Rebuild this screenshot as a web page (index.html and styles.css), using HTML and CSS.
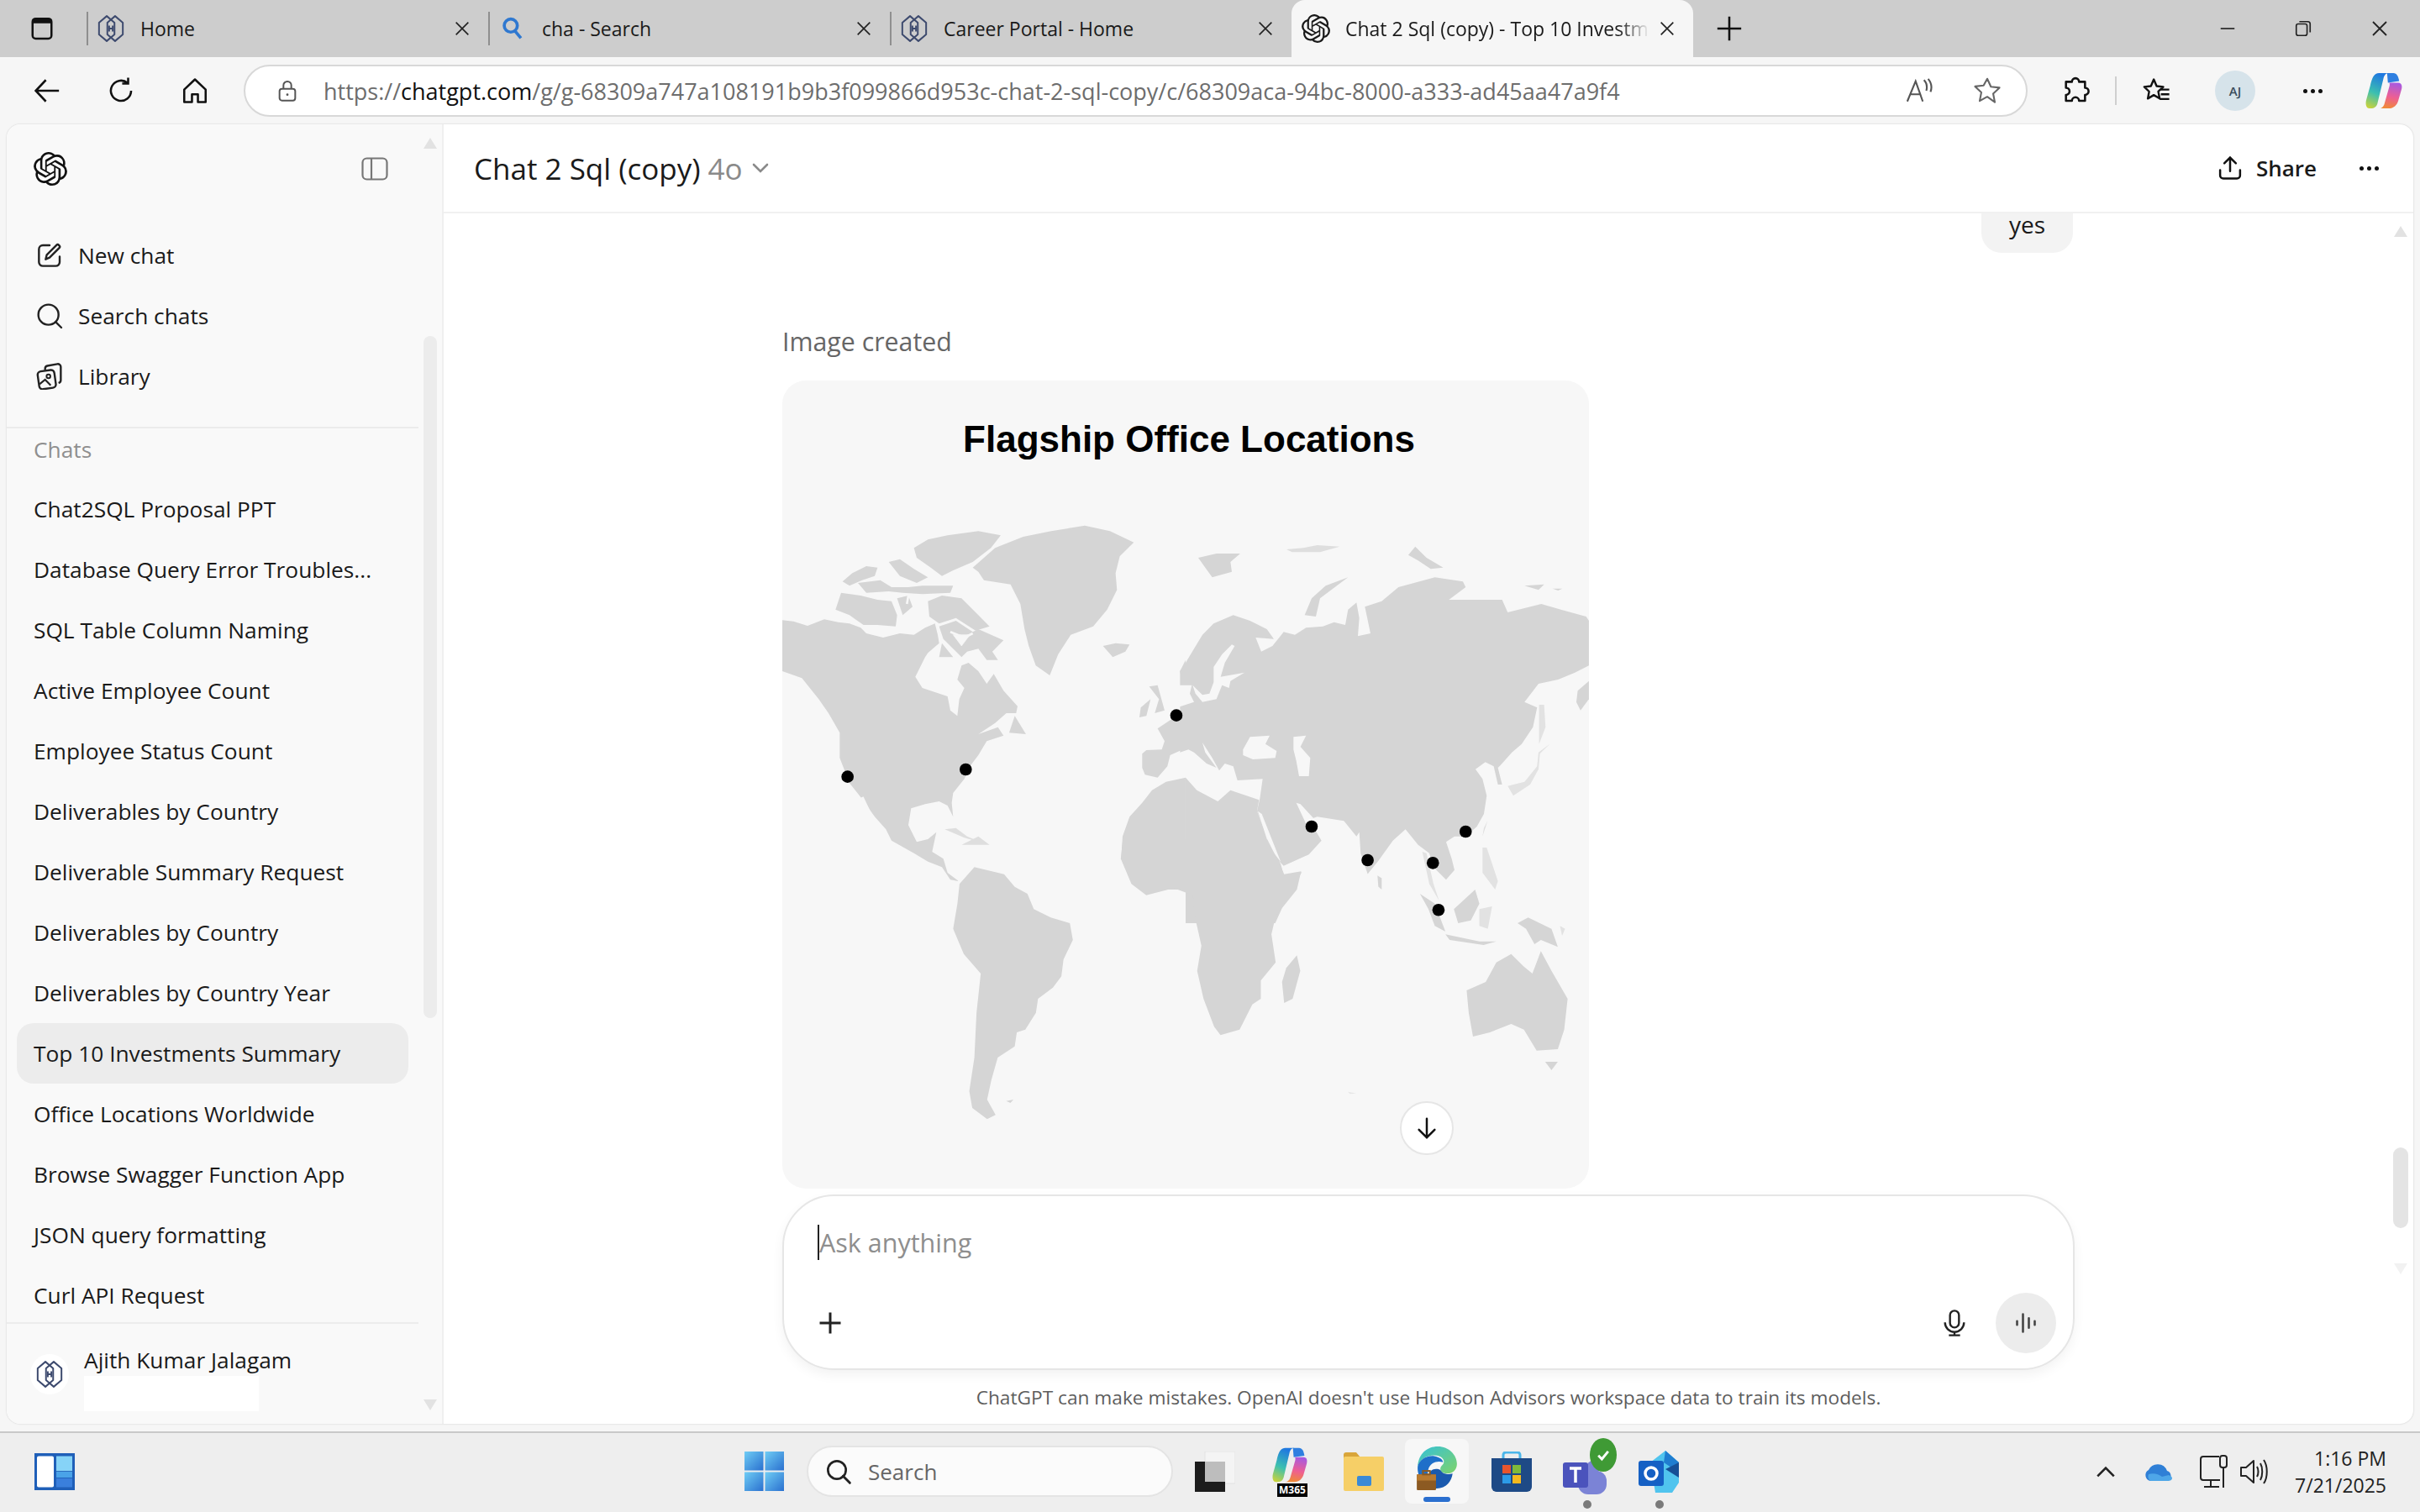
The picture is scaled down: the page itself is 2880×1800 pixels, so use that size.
FILE: index.html
```html
<!DOCTYPE html>
<html lang="en">
<head>
    <meta charset="UTF-8">
    <title>Chat 2 Sql (copy) - Top 10 Investments Summary</title>
    <link rel="stylesheet" href="styles.css">
</head>
<body>
    <svg class="defs" width="0" height="0">
        <symbol id="hex" viewBox="0 0 24 24">
            <g fill="none" stroke="currentColor" stroke-width="1.4" stroke-linejoin="round">
                <path d="M8.5 1.5 15 7v10l-6.5 5.500L2 17V7z"/>
                <path d="M15.5 1.5 22 7v10l-6.5 5.500L9 17V7z"/>
                <path d="M10.5 9.500v5M13.500 9.500v5M10.500 12h3"/>
            </g>
        </symbol>
        <symbol id="openai" viewBox="0 0 24 24">
            <path fill="currentColor" d="M22.2819 9.8211a5.9847 5.9847 0 0 0-.5157-4.9108 6.0462 6.0462 0 0 0-6.5098-2.9A6.0651 6.0651 0 0 0 4.9807 4.1818a5.9847 5.9847 0 0 0-3.9977 2.9 6.0462 6.0462 0 0 0 .7427 7.0966 5.98 5.98 0 0 0 .511 4.9107 6.051 6.051 0 0 0 6.5146 2.9001A5.9847 5.9847 0 0 0 13.2599 24a6.0557 6.0557 0 0 0 5.7718-4.2058 5.9894 5.9894 0 0 0 3.9977-2.9001 6.0557 6.0557 0 0 0-.7475-7.0729zm-9.022 12.6081a4.4755 4.4755 0 0 1-2.8764-1.0408l.1419-.0804 4.7783-2.7582a.7948.7948 0 0 0 .3927-.6813v-6.7369l2.02 1.1686a.071.071 0 0 1 .038.052v5.5826a4.504 4.504 0 0 1-4.4945 4.4944zm-9.6607-4.1254a4.4708 4.4708 0 0 1-.5346-3.0137l.142.0852 4.783 2.7582a.7712.7712 0 0 0 .7806 0l5.8428-3.3685v2.3324a.0804.0804 0 0 1-.0332.0615L9.74 19.9502a4.4992 4.4992 0 0 1-6.1408-1.6464zM2.3408 7.8956a4.485 4.485 0 0 1 2.3655-1.9728V11.6a.7664.7664 0 0 0 .3879.6765l5.8144 3.3543-2.0201 1.1685a.0757.0757 0 0 1-.071 0l-4.8303-2.7865A4.504 4.504 0 0 1 2.3408 7.872zm16.5963 3.8558L13.1038 8.364 15.1192 7.2a.0757.0757 0 0 1 .071 0l4.8303 2.7913a4.4944 4.4944 0 0 1-.6765 8.1042v-5.6772a.79.79 0 0 0-.407-.667zm2.0107-3.0231l-.142-.0852-4.7735-2.7818a.7759.7759 0 0 0-.7854 0L9.409 9.2297V6.8974a.0662.0662 0 0 1 .0284-.0615l4.8303-2.7866a4.4992 4.4992 0 0 1 6.6802 4.66zM8.3065 12.863l-2.02-1.1638a.0804.0804 0 0 1-.038-.0567V6.0742a4.4992 4.4992 0 0 1 7.3757-3.4537l-.142.0805L8.704 5.459a.7948.7948 0 0 0-.3927.6813zm1.0976-2.3654l2.602-1.4998 2.6069 1.4998v2.9994l-2.5974 1.4997-2.6067-1.4997Z"/>
        </symbol>
        <symbol id="close" viewBox="0 0 24 24">
            <path d="M4 4l16 16M20 4 4 20" fill="none" stroke="currentColor" stroke-width="1.8"/>
        </symbol>
        <symbol id="copilot" viewBox="0 0 24 24">
            <path d="M14 1h4c2 0 3 2 3.500 5l-7 1z" fill="#2f7fe0"/>
            <path d="M9 1h6c-2 0-2.800 1.500-3.300 3.500L8 20c-.5 2-2 3-4 3H3c-2 0-2.500-2.500-2-5l2.500-9C4.500 4 6 1 9 1z" fill="url(#copilot-a)"/>
            <path d="M15 7h6c2 0 2.500 2 2 4l-2 7c-.8 3-3 5-6 5H9c2 0 3-1.500 3.500-3.500L15.500 9c.2-1 .2-2-.5-2z" fill="url(#copilot-b)"/>
        </symbol>
        <linearGradient id="copilot-a" x1="0.5" y1="0" x2="0.2" y2="1">
            <stop offset="0" stop-color="#1f78e0"/>
            <stop offset="0.55" stop-color="#3cc0b0"/>
            <stop offset="1" stop-color="#c8d23c"/>
        </linearGradient>
        <linearGradient id="copilot-b" x1="0.6" y1="0" x2="0.4" y2="1">
            <stop offset="0" stop-color="#a85ae0"/>
            <stop offset="0.55" stop-color="#ee5f92"/>
            <stop offset="1" stop-color="#f08a36"/>
        </linearGradient>
        <linearGradient id="edge-a" x1="0" y1="0" x2="1" y2="1">
            <stop offset="0" stop-color="#35c1d8"/>
            <stop offset="1" stop-color="#7ed36a"/>
        </linearGradient>
        <linearGradient id="win-a" x1="0" y1="0" x2="1" y2="1">
            <stop offset="0" stop-color="#6fcdf5"/>
            <stop offset="1" stop-color="#2a70cf"/>
        </linearGradient>
    </svg>

    <div class="tabbar">
        <svg class="tab-panel" viewBox="0 0 24 24" width="30" height="30"><rect x="3" y="2.500" width="18" height="19" rx="3" fill="none" stroke="#111" stroke-width="2"/><path d="M3 3h18v4H3z" fill="#111"/></svg>
        <div class="tab">
            <svg class="tab-icon icon-hex"><use href="#hex"/></svg>
            <span class="tab-title">Home</span>
            <svg class="tab-close"><use href="#close"/></svg>
        </div>
        <div class="tab">
            <svg class="tab-icon" viewBox="0 0 24 24"><circle cx="10.500" cy="9.500" r="5.500" fill="none" stroke="#2f78d0" stroke-width="2.600"/><path d="M14 14l5 6" stroke="#2f78d0" stroke-width="2.600"/></svg>
            <span class="tab-title">cha - Search</span>
            <svg class="tab-close"><use href="#close"/></svg>
        </div>
        <div class="tab">
            <svg class="tab-icon icon-hex"><use href="#hex"/></svg>
            <span class="tab-title">Career Portal - Home</span>
            <svg class="tab-close"><use href="#close"/></svg>
        </div>
        <div class="tab tab-active">
            <svg class="tab-icon"><use href="#openai"/></svg>
            <span class="tab-title">Chat 2 Sql (copy) - Top 10 Investm</span>
            <svg class="tab-close"><use href="#close"/></svg>
        </div>
        <svg class="tab-new" viewBox="0 0 24 24" width="34" height="34"><path d="M12 2v20M2 12h20" stroke="#111" stroke-width="1.800"/></svg>
        <div class="window-controls">
            <svg viewBox="0 0 24 24" width="22" height="22"><path d="M3 12h18" stroke="#222" stroke-width="1.800"/></svg>
            <svg viewBox="0 0 24 24" width="22" height="22"><rect x="3" y="6" width="14" height="15" rx="2.500" fill="none" stroke="#222" stroke-width="1.800"/><path d="M7 3h11a3 3 0 0 1 3 3v11" fill="none" stroke="#222" stroke-width="1.800"/></svg>
            <svg width="24" height="24" class="win-close"><use href="#close"/></svg>
        </div>
    </div>

    <div class="toolbar">
        <svg class="tool tool-back" viewBox="0 0 24 24"><path d="M22 12H3M11 3l-8.500 9 8.500 9" fill="none" stroke="#111" stroke-width="1.800"/></svg>
        <svg class="tool tool-reload" viewBox="0 0 24 24"><path d="M20.500 12a8.500 8.500 0 1 1-3-6.500M18 1v5h-5" fill="none" stroke="#111" stroke-width="1.800"/></svg>
        <svg class="tool tool-home" viewBox="0 0 24 24"><path d="M3 11 12 2.500 21 11v10.500h-6.500V15h-5v6.500H3z" fill="none" stroke="#111" stroke-width="1.800" stroke-linejoin="round"/></svg>
        <div class="address">
            <svg class="lock" viewBox="0 0 24 24"><rect x="4" y="10" width="16" height="12" rx="2.500" fill="none" stroke="#555" stroke-width="1.700"/><path d="M8 10V6.500a4 4 0 0 1 8 0V10" fill="none" stroke="#555" stroke-width="1.700"/><circle cx="12" cy="16" r="1.200" fill="#555"/></svg>
            <span class="url"><span class="url-dim">https://</span>chatgpt.com<span class="url-dim">/g/g-68309a747a108191b9b3f099866d953c-chat-2-sql-copy/c/68309aca-94bc-8000-a333-ad45aa47a9f4</span></span>
            <svg class="addr-read" viewBox="0 0 24 24"><path d="M2 21 9 4l6 17M4.500 15h9M16 3c2 2 3 5 2 9M19.500 2c2.500 3 3.500 7 2 11" fill="none" stroke="#555" stroke-width="1.500"/></svg>
            <svg class="addr-star" viewBox="0 0 24 24"><path d="M12 2.500l2.900 6.300 6.800.8-5 4.700 1.300 6.800L12 16.800l-6 3.300 1.300-6.800-5-4.700 6.800-.8z" fill="none" stroke="#666" stroke-width="1.400" stroke-linejoin="round"/></svg>
        </div>
        <svg class="tool tool-ext" viewBox="0 0 24 24"><path d="M9 4.500a3 3 0 0 1 6 0h5v5a3 3 0 0 1 0 6v5h-5a3 3 0 0 0-6 0H4v-5a3 3 0 0 0 0-6v-5z" fill="none" stroke="#111" stroke-width="1.800" stroke-linejoin="round"/></svg>
        <span class="tool-divider"></span>
        <svg class="tool tool-fav" viewBox="0 0 24 24"><path d="M10 2.500l2.400 5.600 5.600.6-4.200 3.900 1.100 5.900L10 15.600l-5 3 1.100-5.900L2 8.700l5.600-.6zM15 11h8M16 15h7M15 19h8" fill="none" stroke="#111" stroke-width="1.700" stroke-linejoin="round"/></svg>
        <span class="profile">AJ</span>
        <span class="tool-dots"><i></i><i></i><i></i></span>
        <svg class="tool tool-copilot"><use href="#copilot"/></svg>
    </div>

    <div class="app">
        <aside class="sidebar">
            <div class="side-content">
                <div class="side-head">
                    <svg class="side-logo"><use href="#openai"/></svg>
                    <svg class="side-toggle" viewBox="0 0 32 28"><rect x="1.500" y="1.500" width="29" height="25" rx="5" fill="none" stroke="#777" stroke-width="2.200"/><path d="M12 1.500v25" stroke="#777" stroke-width="2.200"/></svg>
                </div>
                <div class="side-nav">
                    <div class="nav-row">
                        <svg viewBox="0 0 24 24"><path d="M12 3H6a3.500 3.500 0 0 0-3.500 3.500v11.500A3.500 3.500 0 0 0 6 21.500h11.500A3.500 3.500 0 0 0 21 18v-5" fill="none" stroke="#222" stroke-width="1.800" stroke-linecap="round"/><path d="M8.500 15.500l1-4 9-9c1-1 3.500 1.500 2.500 2.500l-9 9z" fill="none" stroke="#222" stroke-width="1.800" stroke-linejoin="round"/></svg>
                        <span>New chat</span>
                    </div>
                    <div class="nav-row">
                        <svg viewBox="0 0 24 24"><circle cx="11" cy="11" r="9" fill="none" stroke="#222" stroke-width="1.800"/><path d="M17.500 17.500l5 5" stroke="#222" stroke-width="1.800" stroke-linecap="round"/></svg>
                        <span>Search chats</span>
                    </div>
                    <div class="nav-row">
                        <svg viewBox="0 0 24 24"><path d="M8 6.500V5a2.500 2.500 0 0 1 2-2.400l9-1.600c1.500-.2 3 1 3 2.500v12c0 1.500-.7 2-2 2.500" fill="none" stroke="#222" stroke-width="1.800"/><rect x="2" y="7" width="15" height="16" rx="3" fill="none" stroke="#222" stroke-width="1.800" transform="rotate(-8 9 15)"/><circle cx="11" cy="12" r="1.700" fill="none" stroke="#222" stroke-width="1.500"/><path d="M3 19l5-4 5 5" fill="none" stroke="#222" stroke-width="1.600"/></svg>
                        <span>Library</span>
                    </div>
                </div>
                <div class="chat-list">
                    <div class="chat-label">Chats</div>
                    <div class="chat-row">Chat2SQL Proposal PPT</div>
                    <div class="chat-row">Database Query Error Troubles...</div>
                    <div class="chat-row">SQL Table Column Naming</div>
                    <div class="chat-row">Active Employee Count</div>
                    <div class="chat-row">Employee Status Count</div>
                    <div class="chat-row">Deliverables by Country</div>
                    <div class="chat-row">Deliverable Summary Request</div>
                    <div class="chat-row">Deliverables by Country</div>
                    <div class="chat-row">Deliverables by Country Year</div>
                    <div class="chat-row chat-row-active">Top 10 Investments Summary</div>
                    <div class="chat-row">Office Locations Worldwide</div>
                    <div class="chat-row">Browse Swagger Function App</div>
                    <div class="chat-row">JSON query formatting</div>
                    <div class="chat-row">Curl API Request</div>
                </div>
                <div class="side-foot">
                    <span class="foot-avatar"><svg class="icon-hex"><use href="#hex"/></svg></span>
                    <div class="foot-text">
                        <div class="foot-name">Ajith Kumar Jalagam</div>
                        <div class="foot-mask"></div>
                    </div>
                </div>
            </div>
            <div class="side-scroll">
                <span class="arrow-up"></span>
                <span class="side-thumb"></span>
                <span class="arrow-down"></span>
            </div>
        </aside>

        <main class="main">
            <header class="main-head">
                <div class="model">Chat 2 Sql (copy) <span class="model-ver">4o</span>
                    <svg class="model-caret" viewBox="0 0 24 24"><path d="M4 8l8 8 8-8" fill="none" stroke="#8a8a8a" stroke-width="2.600" stroke-linecap="round"/></svg>
                </div>
                <div class="head-actions">
                    <svg class="share-icon" viewBox="0 0 24 24"><path d="M12 15V2.500M6.500 7.500 12 2l5.500 5.500M2.500 14v5a3 3 0 0 0 3 3h13a3 3 0 0 0 3-3v-5" fill="none" stroke="#111" stroke-width="2" stroke-linecap="round"/></svg>
                    <span class="share-text">Share</span>
                    <span class="tool-dots head-dots"><i></i><i></i><i></i></span>
                </div>
            </header>
            <section class="thread">
                <div class="bubble">yes</div>
                <div class="thread-col">
                    <div class="image-label">Image created</div>
                    <div class="image-card">
                        <div class="map-title">Flagship Office Locations</div>
                        <svg class="map" viewBox="0 0 960 962">
                            <!-- traced at 3x from the top-left of the land area -->
                            <g class="land" transform="translate(0 166) scale(.3333)" fill="#d5d5d5">
                                <path d="M0 358 40 362 90 378 150 355 200 365 240 370 280 385 300 405 360 420 420 405 470 410 510 385 545 370 555 410 560 440 520 475 510 490 475 560 500 600 590 630 600 680 625 700 632 640 650 600 625 570 640 520 665 510 700 540 730 585 755 550 790 610 840 665 835 690 800 690 760 725 700 765 770 740 790 770 730 790 700 840 670 880 650 925 610 975 605 1010 610 1060 590 1020 560 1005 510 1015 460 1030 450 1090 480 1150 520 1140 550 1115 535 1185 575 1210 590 1260 630 1290 600 1285 570 1240 520 1220 470 1190 390 1145 370 1105 330 1060 280 990 240 940 205 850 205 760 165 690 130 640 70 565 0 540Z"/>
                                <path d="M620 360 680 400 700 390 790 430 750 470 770 500 730 500 700 460 660 470 640 490 600 450 575 425 560 380Z"/>
                                <path d="M570 440 610 490 560 490Z"/>
                                <path d="M190 320 210 260 280 270 340 285 390 290 410 340 405 380 340 375 290 375 240 340Z"/>
                                <path d="M215 220 250 190 300 165 340 170 330 200 285 215 240 235Z"/>
                                <path d="M270 225 350 215 390 240 450 240 500 235 610 235 600 260 500 265 430 260 380 255 300 260Z"/>
                                <path d="M470 100 520 70 590 55 700 40 780 55 745 100 680 150 610 180 570 200 530 170 480 135Z"/>
                                <path d="M380 150 420 140 470 175 520 205 480 225 420 200Z"/>
                                <path d="M410 280 450 270 465 310 430 340Z"/>
                                <path d="M520 290 570 270 640 280 700 340 740 380 690 395 620 350 560 370 525 345Z"/>
                                <path d="M680 170 760 100 860 60 960 40 1080 20 1170 40 1255 80 1205 130 1190 190 1195 250 1160 320 1110 380 1030 410 985 480 955 555 905 520 880 450 865 390 850 300 815 230 720 215 700 185Z"/>
                                <path d="M1145 450 1190 440 1240 445 1225 470 1180 490Z"/>
                                <path d="M1310 595 1340 590 1365 680 1330 690 1345 640Z"/>
                                <path d="M1280 670 1315 640 1300 700 1275 705Z"/>
                                <path d="M810 760 830 700 870 765Z"/>
                                <path d="M1440 690 1385 715 1340 745 1365 790 1355 820 1300 822 1285 835 1285 885 1295 910 1340 920 1375 880 1385 840 1440 815Z"/>
                                <path d="M1440 920 1370 935 1320 965 1285 1010 1240 1060 1215 1130 1210 1210 1250 1290 1310 1335 1370 1320 1440 1320Z"/>
                                <path d="M1420 540 1440 500 1440 590 1425 570Z"/>
                                <path d="M580 1105 620 1100 660 1130 720 1155 650 1135Z" fill="#dedede"/>
                                <path d="M640 1160 700 1130 740 1160 680 1160Z" fill="#dedede"/>
                            </g>
                            <g class="land" transform="translate(0 166) scale(.3333)" fill="none" stroke="#f7f7f7">
                                <path d="M285 990 335 1095" stroke-width="10"/>
                                <path d="M310 395 350 410M400 405 440 380M445 300 450 270M600 400 650 420 680 405" stroke-width="8"/>
                                <path d="M610 410 670 410 640 450Z" fill="#f7f7f7" stroke-width="2"/>
                            </g>
                            <g class="land" transform="translate(480 166) scale(.3333)" fill="#d5d5d5">
                                <path d="M-20 540 0 510 60 410 100 370 170 340 230 360 290 390 315 425 250 420 270 470 310 450 350 400 390 410 430 385 490 380 530 365 570 375 580 320 610 295 620 350 615 415 660 405 640 310 700 290 760 240 890 205 990 220 1000 240 940 285 1060 285 1130 285 1150 330 1270 300 1340 320 1430 345 1440 360 1440 520 1390 545 1330 570 1260 585 1210 650 1255 670 1240 740 1200 800 1165 830 1125 875 1115 885 1130 945 1115 945 1100 880 1070 865 1035 890 1060 925 1075 985 1065 1050 1040 1095 1000 1130 960 1130 930 1150 950 1210 960 1250 930 1285 905 1260 885 1240 870 1190 830 1160 785 1105 740 1145 690 1215 650 1265 625 1190 620 1115 610 1130 565 1075 470 1060 440 1070 470 1120 485 1145 440 1195 350 1235 330 1215 290 1130 255 1040 265 995 275 925 185 930 170 880 140 870 120 895 95 850 60 795 70 830 110 885 75 870 30 830 10 820 -20 830Z"/>
                                <path d="M0 920 40 965 115 1005 160 965 262 1000 255 1040 290 1130 340 1230 350 1268 415 1258 365 1340 320 1440 0 1440Z"/>
                                <path d="M425 340 450 280 500 235 580 205 540 235 480 280 465 345Z"/>
                                <path d="M45 135 110 120 195 120 160 150 165 185 95 205 70 170Z"/>
                                <path d="M360 105 420 100 470 90 550 95 480 115 380 115Z" fill="#dedede"/>
                                <path d="M795 125 820 95 860 135 920 170 875 175 830 145Z"/>
                                <path d="M1210 235 1280 230 1260 250Z"/>
                                <path d="M1310 245 1345 245 1330 252Z"/>
                                <path d="M1440 575 1400 610 1395 650 1410 680 1440 640Z"/>
                                <path d="M1262 660 1280 660 1285 740 1262 800Z" fill="#e2e2e2"/>
                                <path d="M1300 800 1260 830 1255 880 1210 935 1150 950 1170 985 1230 945 1260 890 1265 835Z" fill="#e2e2e2"/>
                                <path d="M1065 1100 1078 1075 1060 1130Z" fill="#dedede"/>
                                <path d="M685 1270 700 1280 700 1320 688 1310Z"/>
                                <path d="M845 1185 870 1300 905 1360 885 1300 860 1190Z" fill="#e2e2e2"/>
                                <path d="M1060 1170 1075 1170 1115 1290 1105 1320 1060 1260Z" fill="#e2e2e2"/>
                            </g>
                            <g class="land" transform="translate(480 166) scale(.3333)" fill="#f7f7f7">
                                <path d="M165 445 175 450 140 510 125 560 210 545 160 575 155 600 130 590 110 640 60 650 35 620 25 590 60 625 85 620 100 580 100 525 130 480Z"/>
                                <path d="M-25 590 22 590 15 620 30 650 -25 668Z"/>
                                <path d="M205 820 230 775 300 770 285 800 325 825 320 850 240 855 205 840Z"/>
                                <path d="M385 775 430 770 410 810 445 850 440 915 405 915 395 860 385 820Z"/>
                                <path d="M395 1010 410 1015 470 1080 430 1085Z"/>
                                <path d="M258 1040 272 1050 340 1222 300 1170Z"/>
                                <path d="M345 1240 430 1200 415 1230 350 1268Z"/>
                            </g>
                            <g class="land" transform="translate(168 546) scale(.505 .3333)" fill="#d5d5d5">
                                <path d="M120 100 190 125 215 170 245 195 260 250 300 280 345 300 352 360 330 430 325 490 305 530 270 570 265 620 240 680 220 690 215 740 175 780 160 860 150 930 170 985 150 1000 115 960 108 900 120 780 125 620 135 480 95 410 70 320 80 230 85 160Z"/>
                                <path d="M470 0 810 0 840 90 850 125 890 115 880 180 830 275 820 340 830 440 795 505 795 570 775 590 745 680 700 700 685 670 660 570 645 470 655 380 640 280 635 200 590 175 525 200 490 160 465 70Z"/>
                                <path d="M880 415 888 470 870 570 850 585 845 510 855 460Z"/>
                                <path d="M1280 540 1325 510 1350 440 1385 410 1415 455 1435 480 1455 400 1480 470 1518 570 1510 680 1495 750 1445 755 1415 680 1385 660 1335 690 1295 705 1285 620Z"/>
                                <path d="M1465 795 1495 795 1480 825Z"/>
                                <path d="M1170 195 1205 230 1230 330 1205 310 1190 250Z"/>
                                <path d="M1230 340 1310 365 1350 365 1320 378 1240 360Z"/>
                                <path d="M1250 250 1300 180 1310 230 1290 290 1260 300Z"/>
                                <path d="M1310 250 1340 240 1330 320 1310 310Z" fill="#e2e2e2"/>
                                <path d="M1400 300 1425 280 1480 320 1495 385 1455 360 1440 375 1420 320Z"/>
                                <path d="M195 935 212 930 205 942Z"/>
                                <path d="M1000 902 1020 908 1005 910Z" fill="#e6e6e6"/>
                                <path d="M1500 310 1512 320 1505 345Z" fill="#e2e2e2"/>
                            </g>
                            <g transform="translate(0 166) scale(.3333)">
                                <circle cx="233" cy="917" r="22"/>
                                <circle cx="655" cy="891" r="22"/>
                                <circle cx="1407" cy="698" r="22"/>
                                <circle cx="1890" cy="1095" r="22"/>
                                <circle cx="2090" cy="1215" r="22"/>
                                <circle cx="2323" cy="1225" r="22"/>
                                <circle cx="2440" cy="1113" r="22"/>
                                <circle cx="2343" cy="1393" r="22"/>
                            </g>
                        </svg>
                        <button class="scroll-down">
                            <svg viewBox="0 0 24 24" width="30" height="30"><path d="M12 3v18M4.500 13.500 12 21l7.500-7.500" fill="none" stroke="#111" stroke-width="2" stroke-linecap="round"/></svg>
                        </button>
                    </div>
                    <div class="composer">
                        <div class="composer-input"><span class="caret"></span>Ask anything</div>
                        <div class="composer-bar">
                            <svg class="composer-plus" viewBox="0 0 24 24"><path d="M12 2v20M2 12h20" stroke="#222" stroke-width="2.400"/></svg>
                            <svg class="composer-mic" viewBox="0 0 24 24"><rect x="8" y="1" width="8" height="15" rx="4" fill="none" stroke="#222" stroke-width="1.800"/><path d="M3.500 11.500a8.500 8.500 0 0 0 17 0M12 20v3M7 23h10" fill="none" stroke="#222" stroke-width="1.800"/></svg>
                            <span class="composer-voice">
                                <svg viewBox="0 0 24 24" width="28" height="28"><path d="M3 10v4M9 3v18M15 7v10M21 10v4" stroke="#444" stroke-width="2.200" stroke-linecap="round"/></svg>
                            </span>
                        </div>
                    </div>
                </div>
                <div class="disclaimer">ChatGPT can make mistakes. OpenAI doesn't use Hudson Advisors workspace data to train its models.</div>
            </section>
            <div class="main-scroll">
                <span class="arrow-up"></span>
                <span class="main-thumb"></span>
                <span class="arrow-down arrow-faint"></span>
            </div>
        </main>
    </div>

    <footer class="taskbar">
        <svg class="widgets" viewBox="0 0 48 50" preserveAspectRatio="none"><rect width="48" height="50" fill="#1f5fb8"/><rect x="3" y="4" width="20" height="42" rx="2" fill="#fff"/><rect x="26" y="4" width="19" height="20" fill="#86d3f7"/><rect x="26" y="25" width="19" height="8" fill="#4aa3e8"/><rect x="26" y="34" width="19" height="12" fill="#3a7fdc"/></svg>
        <svg class="start" viewBox="0 0 48 48"><rect width="23" height="23" fill="url(#win-a)"/><rect x="25" width="23" height="23" fill="url(#win-a)"/><rect y="25" width="23" height="23" fill="url(#win-a)"/><rect x="25" y="25" width="23" height="23" fill="url(#win-a)"/></svg>
        <div class="task-search">
            <svg viewBox="0 0 24 24" width="32" height="32"><circle cx="10.500" cy="10.500" r="8" fill="none" stroke="#222" stroke-width="2"/><path d="M16 16l6 6" stroke="#222" stroke-width="2.200" stroke-linecap="round"/></svg>
            <span>Search</span>
        </div>
        <svg class="task-icon task-view" viewBox="0 0 48 48"><rect x="12" y="0" width="36" height="38" fill="#f4f4f4"/><rect x="12" y="0" width="36" height="38" fill="none" stroke="#e2e2e2"/><rect x="0" y="12" width="36" height="36" fill="#1c1c1c"/><rect x="12" y="12" width="24" height="24" fill="#bdbdbd"/></svg>
        <div class="task-m365">
            <svg width="44" height="44"><use href="#copilot"/></svg>
            <span class="m365-label">M365</span>
        </div>
        <svg class="task-icon task-folder" viewBox="0 0 48 46"><path d="M0 3a3 3 0 0 1 3-3h12l5 6v8H0z" fill="#d9a53a"/><rect y="5" width="48" height="41" rx="2" fill="#f6cf67"/><rect x="16" y="28" width="17" height="12" rx="2" fill="#3a8ad6"/></svg>
        <div class="task-edge">
            <svg viewBox="0 0 48 52" width="50" height="54"><path d="M2 24C3 9 13 1 25 1c13 0 22 10 22 20 0 7-5 11-11 11-5 0-8-2-8-5 0-5 4-4 4-9 0-4-5-7-11-7C12 11 4 16 2 24z" fill="url(#edge-a)"/><path d="M2 24c2-8 10-13 19-12 6 1 10 4 10 7-6-2-15 0-17 9-2 8 2 17 10 21-12-1-23-11-22-25z" fill="#1f6fc9"/><path d="M28 28c2 4 8 6 14 4-1 9-8 18-20 17-7-4-9-13-6-19 3-4 9-4 12-2z" fill="#1a5aae"/><rect x="1" y="33" width="22" height="18" rx="1" fill="#8c5a22"/><rect x="1" y="33" width="22" height="7" fill="#b87a30"/><rect x="8" y="29" width="8" height="4" fill="none" stroke="#8c5a22" stroke-width="2"/></svg>
            <span class="edge-bar"></span>
        </div>
        <svg class="task-icon task-store" viewBox="0 0 48 48"><path d="M14 8V4a3 3 0 0 1 3-3h14a3 3 0 0 1 3 3v4" fill="none" stroke="#4cb6ea" stroke-width="3"/><path d="M0 8h48v34a6 6 0 0 1-6 6H6a6 6 0 0 1-6-6z" fill="#1e4a86"/><rect x="13" y="16" width="10" height="10" fill="#e8552d"/><rect x="25" y="16" width="10" height="10" fill="#7fba3a"/><rect x="13" y="28" width="10" height="10" fill="#2c9be8"/><rect x="25" y="28" width="10" height="10" fill="#f5b91e"/></svg>
        <div class="task-app">
            <svg viewBox="0 0 58 58" width="58" height="58"><circle cx="36" cy="24" r="8" fill="#7b83d6"/><rect x="18" y="28" width="34" height="28" rx="12" fill="#7b83d6"/><rect x="0" y="18" width="30" height="30" rx="3" fill="#4b53bc"/><path d="M8 25h14M15 25v17" stroke="#fff" stroke-width="3.500"/></svg>
            <span class="teams-badge"><svg viewBox="0 0 24 24" width="20" height="20"><path d="M5 13l5 5 9-11" fill="none" stroke="#fff" stroke-width="3.500"/></svg></span>
            <span class="app-dot"></span>
        </div>
        <div class="task-app task-outlook">
            <svg viewBox="0 0 50 50" width="50" height="50"><path d="M14 14 32 0l16 14v24l-8 12H20z" fill="#50c4ee"/><path d="M32 0l16 14v12L30 14z" fill="#1f7dd0"/><path d="M48 14v18L32 22z" fill="#164f96"/><rect x="0" y="12" width="30" height="30" rx="3" fill="#1560c4"/><circle cx="15" cy="27" r="7" fill="none" stroke="#fff" stroke-width="3.500"/></svg>
            <span class="app-dot"></span>
        </div>
        <div class="tray">
            <svg viewBox="0 0 24 24" width="26" height="26"><path d="M3 17l9-9 9 9" fill="none" stroke="#222" stroke-width="2.400"/></svg>
            <svg class="tray-cloud" viewBox="0 0 36 24" width="36" height="24"><path d="M8 23A7 7 0 0 1 6 10a12 12 0 0 1 22 1 6.500 6.500 0 0 1 1 12z" fill="#2f7fd6"/><path d="M8 23a7 7 0 0 1-2-8c6-2 12 0 16 3l8-2c6 2 5 7-1 7z" fill="#4ea6e8"/></svg>
            <svg class="tray-net" viewBox="0 0 34 42" width="34" height="42"><path d="M24 3H5a3 3 0 0 0-3 3v22a3 3 0 0 0 3 3h20M14 31v7M6 39h18" fill="none" stroke="#222" stroke-width="2"/><rect x="25" y="2" width="8" height="14" rx="3" fill="none" stroke="#222" stroke-width="2"/><path d="M29 16v24" stroke="#222" stroke-width="2"/></svg>
            <svg class="tray-vol" viewBox="0 0 34 32" width="34" height="32"><path d="M2 11v10h6l9 8V3l-9 8z" fill="none" stroke="#222" stroke-width="2" stroke-linejoin="round"/><path d="M21 10c2 3 2 9 0 12M25 6c3 5 3 15 0 20M29 2c5 7 5 21 0 28" fill="none" stroke="#222" stroke-width="2"/></svg>
            <div class="clock"><div>1:16 PM</div><div>7/21/2025</div></div>
        </div>
    </footer>
</body>
</html>
```

FILE: styles.css
```css
* {
    margin: 0;
    padding: 0;
    box-sizing: border-box;
}

body {
    font-family: "Open Sans", "Noto Sans", Arial, sans-serif;
    width: 2880px;
    height: 1800px;
    overflow: hidden;
    display: flex;
    flex-direction: column;
    background: #f6f6f6;
    color: #1a1a1a;
}

.defs {
    position: absolute;
}

.icon-hex {
    color: #3d4a6e;
}

/* browser tabs */
.tabbar {
    height: 68px;
    flex: none;
    display: flex;
    align-items: center;
    background: #cdcdcd;
    padding-left: 35px;
}

.tab-panel {
    flex: none;
    margin-right: 38px;
}

.tab {
    width: 478px;
    height: 68px;
    flex: none;
    display: flex;
    align-items: center;
    padding: 0 20px 0 12px;
    position: relative;
    font-size: 23px;
}

.tab::before {
    content: "";
    width: 2px;
    height: 40px;
    background: #8f8f8f;
    position: absolute;
    left: 0;
    top: 14px;
}

.tab-icon {
    width: 34px;
    height: 34px;
    flex: none;
}

.tab-title {
    flex: 1;
    margin: 0 18px;
    white-space: nowrap;
}

.tab-close {
    width: 22px;
    height: 22px;
    flex: none;
    color: #222;
}

.tab-active {
    background: #f6f6f6;
    border-radius: 16px 16px 0 0;
}

.tab-active::before {
    display: none;
}

.tab-active .tab-title {
    margin-right: 10px;
    mask-image: linear-gradient(to right, #000 90%, transparent);
}

.tab-new {
    flex: none;
    margin-left: 26px;
}

.window-controls {
    margin-left: auto;
    display: flex;
    align-items: center;
    gap: 68px;
    padding-right: 36px;
}

.win-close {
    color: #222;
}

/* toolbar */
.toolbar {
    height: 80px;
    flex: none;
    display: flex;
    align-items: center;
    background: #f6f6f6;
}

.tool {
    width: 34px;
    height: 34px;
    flex: none;
}

.tool-back {
    margin-left: 39px;
}

.tool-reload {
    margin-left: 54px;
}

.tool-home {
    margin-left: 54px;
}

.address {
    width: 2123px;
    height: 62px;
    margin-left: 41px;
    flex: none;
    display: flex;
    align-items: center;
    background: #fff;
    border: 2px solid #d8d8d8;
    border-radius: 31px;
    padding: 0 8px 0 36px;
}

.lock {
    width: 28px;
    height: 28px;
    flex: none;
}

.url {
    margin-left: 29px;
    font-size: 27px;
    color: #111;
    white-space: nowrap;
}

.url-dim {
    color: #6d6d6d;
}

.addr-read {
    width: 34px;
    height: 34px;
    margin-left: auto;
}

.addr-star {
    width: 36px;
    height: 36px;
    margin-left: 46px;
    margin-right: 20px;
}

.tool-ext {
    margin-left: 40px;
}

.tool-divider {
    width: 2px;
    height: 34px;
    background: #cfcfcf;
    margin-left: 30px;
}

.tool-fav {
    margin-left: 30px;
}

.profile {
    width: 48px;
    height: 48px;
    border-radius: 50%;
    background: #d6e3ea;
    color: #3b4d5c;
    font-size: 15px;
    font-weight: 600;
    display: flex;
    align-items: center;
    justify-content: center;
    margin-left: 53px;
    flex: none;
}

.tool-dots {
    display: flex;
    gap: 4px;
    margin-left: 57px;
    flex: none;
}

.tool-dots i {
    width: 5px;
    height: 5px;
    border-radius: 50%;
    background: #111;
}

.tool-copilot {
    width: 46px;
    height: 46px;
    margin-left: 50px;
}

/* page card */
.app {
    flex: 1;
    min-height: 0;
    margin: 0 8px 9px 8px;
    display: flex;
    background: #fff;
    border-radius: 16px;
    overflow: hidden;
    box-shadow: 0 0 2px #c4c4c4;
}

.sidebar {
    width: 520px;
    flex: none;
    display: flex;
    background: #f9f9f9;
    border-right: 2px solid #efefef;
}

.side-content {
    width: 490px;
    flex: none;
    display: flex;
    flex-direction: column;
}

.side-head {
    height: 105px;
    flex: none;
    display: flex;
    align-items: center;
    justify-content: space-between;
    padding: 0 36px 0 32px;
}

.side-logo {
    width: 40px;
    height: 40px;
    color: #111;
}

.side-toggle {
    width: 32px;
    height: 28px;
}

.side-nav {
    height: 257px;
    flex: none;
    padding-top: 15px;
    border-bottom: 2px solid #ececec;
}

.nav-row {
    height: 72px;
    display: flex;
    align-items: center;
    padding-left: 35px;
    gap: 18px;
    font-size: 26.3px;
}

.nav-row svg {
    width: 32px;
    height: 32px;
    flex: none;
}

.chat-list {
    flex: 1;
    min-height: 0;
    overflow: hidden;
}

.chat-label {
    height: 60px;
    padding: 0 0 11px 32px;
    font-size: 26.3px;
    color: #8f8f8f;
    display: flex;
    align-items: center;
}

.chat-row {
    height: 72px;
    line-height: 72px;
    padding-left: 32px;
    font-size: 26.3px;
    white-space: nowrap;
}

.chat-row-active {
    background: #ececec;
    border-radius: 20px;
    margin: 0 12px 0 12px;
    padding-left: 20px;
}

.side-foot {
    height: 121px;
    flex: none;
    border-top: 2px solid #ececec;
    display: flex;
    padding-left: 28px;
}

.foot-avatar {
    width: 46px;
    height: 48px;
    background: #fff;
    border-radius: 50%;
    display: flex;
    align-items: center;
    justify-content: center;
    margin-top: 36px;
    flex: none;
}

.foot-avatar svg {
    width: 34px;
    height: 34px;
}

.foot-text {
    margin-left: 18px;
    padding-top: 24px;
}

.foot-name {
    font-size: 26.3px;
    line-height: 38px;
    white-space: nowrap;
}

.foot-mask {
    width: 208px;
    height: 42px;
    background: #fff;
}

.side-scroll {
    width: 16px;
    margin-left: 6px;
    flex: none;
    position: relative;
    display: flex;
    flex-direction: column;
    align-items: center;
}

.arrow-up,
.arrow-down {
    width: 0;
    height: 0;
    border-left: 8px solid transparent;
    border-right: 8px solid transparent;
    position: absolute;
}

.arrow-up {
    border-bottom: 13px solid #e2e2e2;
    top: 16px;
}

.arrow-down {
    border-top: 13px solid #e2e2e2;
    bottom: 16px;
}

.arrow-faint {
    border-top-color: #f2f2f2;
}

.side-thumb {
    position: absolute;
    top: 252px;
    width: 16px;
    height: 812px;
    border-radius: 8px;
    background: #ececec;
}

/* main column */
.main {
    flex: 1;
    min-width: 0;
    display: flex;
    flex-direction: column;
    position: relative;
}

.main-head {
    height: 106px;
    flex: none;
    display: flex;
    align-items: center;
    justify-content: space-between;
    padding: 0 41px 0 36px;
    border-bottom: 2px solid #f1f1f1;
}

.model {
    font-size: 35px;
    display: flex;
    align-items: center;
    gap: 9px;
}

.model-ver {
    color: #8a8a8a;
}

.model-caret {
    width: 24px;
    height: 24px;
}

.head-actions {
    display: flex;
    align-items: center;
}

.share-icon {
    width: 30px;
    height: 32px;
}

.share-text {
    font-size: 26px;
    font-weight: 600;
    margin-left: 16px;
}

.head-dots {
    margin-left: 51px;
}

.thread {
    flex: 1;
    min-height: 0;
    display: flex;
    flex-direction: column;
    align-items: center;
}

.bubble {
    width: 109px;
    height: 47px;
    background: #f3f3f3;
    border-radius: 0 0 24px 24px;
    font-size: 28px;
    line-height: 26px;
    text-align: center;
    align-self: flex-end;
    margin-right: 405px;
}

.thread-col {
    width: 1538px;
}

.image-label {
    height: 44px;
    margin-top: 84px;
    font-size: 30.3px;
    line-height: 44px;
    color: #666;
}

.image-card {
    width: 960px;
    height: 962px;
    margin-top: 24px;
    border-radius: 28px;
    background: #f7f7f7;
    overflow: hidden;
    position: relative;
}

.map {
    width: 100%;
    height: 100%;
    display: block;
}

.land {
    filter: blur(0.7px);
}

.map-title {
    position: absolute;
    top: 32px;
    left: 8px;
    right: 0;
    text-align: center;
    font-family: "Liberation Sans", Arial, sans-serif;
    font-weight: 700;
    font-size: 44px;
    line-height: 76px;
    color: #000;
}

.scroll-down {
    position: absolute;
    left: 735px;
    top: 858px;
    width: 64px;
    height: 64px;
    border-radius: 50%;
    border: 2px solid #e6e6e6;
    background: #fff;
    display: flex;
    align-items: center;
    justify-content: center;
}

.composer {
    height: 209px;
    margin-top: 7px;
    border: 2px solid #e6e6e6;
    border-radius: 62px;
    background: #fff;
    box-shadow: 0 6px 14px rgba(0, 0, 0, 0.05);
    padding: 0 20px 0 40px;
    display: flex;
    flex-direction: column;
}

.composer-input {
    height: 115px;
    padding-bottom: 5px;
    font-size: 30.5px;
    color: #8e8e8e;
    display: flex;
    align-items: center;
}

.caret {
    width: 2px;
    height: 42px;
    background: #222;
}

.composer-bar {
    display: flex;
    align-items: center;
    height: 72px;
}

.composer-plus {
    width: 30px;
    height: 30px;
}

.composer-mic {
    width: 32px;
    height: 36px;
    margin-left: auto;
    margin-right: 33px;
}

.composer-voice {
    width: 72px;
    height: 72px;
    border-radius: 50%;
    background: #ececec;
    display: flex;
    align-items: center;
    justify-content: center;
}

.disclaimer {
    margin-top: 16px;
    font-size: 22.7px;
    line-height: 34px;
    color: #5d5d5d;
}

.main-scroll {
    position: absolute;
    right: 6px;
    top: 105px;
    bottom: 0;
    width: 18px;
    display: flex;
    justify-content: center;
}

.main-thumb {
    position: absolute;
    top: 1113px;
    width: 18px;
    height: 96px;
    border-radius: 9px;
    background: #e4e4e4;
}

.main-scroll .arrow-down {
    bottom: 178px;
}

/* windows taskbar */
.taskbar {
    height: 96px;
    flex: none;
    display: flex;
    align-items: center;
    background: #eeeeee;
    border-top: 2px solid #c9c9c9;
    padding: 0 0 3px 41px;
}

.widgets {
    width: 48px;
    height: 44px;
    flex: none;
}

.start {
    width: 47px;
    height: 47px;
    flex: none;
    margin-left: 797px;
}

.task-search {
    width: 436px;
    height: 61px;
    margin-left: 27px;
    flex: none;
    display: flex;
    align-items: center;
    gap: 19px;
    padding-left: 20px;
    background: #fbfbfb;
    border: 2px solid #e4e4e4;
    border-radius: 31px;
    font-size: 26px;
    color: #666;
}

.task-icon {
    flex: none;
}

.task-view {
    width: 48px;
    height: 48px;
    margin-left: 26px;
}

.task-m365 {
    width: 50px;
    margin-left: 40px;
    flex: none;
    display: flex;
    flex-direction: column;
    align-items: center;
    position: relative;
    height: 60px;
}

.m365-label {
    position: absolute;
    bottom: 0;
    left: 10px;
    background: #000;
    color: #fff;
    font-size: 12px;
    font-weight: 700;
    line-height: 16px;
    padding: 0 2px;
}

.task-folder {
    width: 50px;
    height: 46px;
    margin-left: 38px;
}

.task-edge {
    width: 76px;
    height: 77px;
    margin-left: 24px;
    flex: none;
    background: #f7f7f7;
    border-radius: 8px;
    display: flex;
    flex-direction: column;
    align-items: center;
    padding-top: 8px;
    position: relative;
}

.edge-bar {
    position: absolute;
    bottom: 2px;
    width: 32px;
    height: 6px;
    border-radius: 3px;
    background: #2a6fcf;
}

.task-store {
    width: 48px;
    height: 48px;
    margin-left: 27px;
}

.task-app {
    position: relative;
    flex: none;
    margin-left: 37px;
    display: flex;
    height: 60px;
    align-items: center;
}

.task-outlook {
    margin-left: 32px;
}

.teams-badge {
    position: absolute;
    top: -10px;
    right: -6px;
    width: 32px;
    height: 40px;
    border-radius: 50%;
    background: #3f9a35;
    display: flex;
    align-items: center;
    justify-content: center;
}

.app-dot {
    position: absolute;
    left: 50%;
    bottom: -14px;
    margin-left: -5px;
    width: 10px;
    height: 10px;
    border-radius: 50%;
    background: #7a7a7a;
}

.tray {
    margin-left: auto;
    display: flex;
    align-items: center;
    padding-right: 40px;
}

.tray-cloud {
    margin-left: 32px;
}

.tray-net {
    margin-left: 30px;
}

.tray-vol {
    margin-left: 14px;
}

.clock {
    margin-left: 32px;
    text-align: right;
    font-size: 23px;
    line-height: 32px;
    color: #222;
}
```
